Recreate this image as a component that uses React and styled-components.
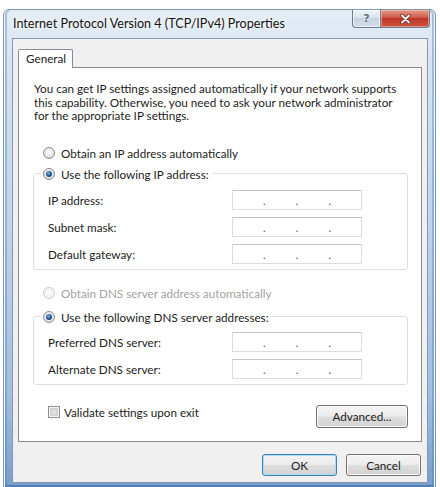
import React from 'react';
import styled, { createGlobalStyle, css } from 'styled-components';

const GlobalStyle = createGlobalStyle`
  html, body { margin: 0; padding: 0; background: #ffffff; }
  body { font-family: Lato, "Noto Sans", sans-serif; font-size: 11.7px; color: #1c1c1c; }
  * { box-sizing: border-box; }
`;

const Page = styled.div`
  width: 440px;
  height: 487px;
  overflow: hidden;
  padding: 9px 4px 0 3px;
`;

const Window = styled.div`
  width: 433px;
  height: 479px;
  border: 1px solid #7f97b2;
  border-radius: 6px 6px 0 0;
  background: linear-gradient(180deg, #e4edf6 0%, #d6e3f0 12%, #c0d4ea 45%, #a2c0e1 80%, #789fcc 100%);
  box-shadow: inset 1px 0 0 #f4f8fc, inset -1px 0 0 #f4f8fc, inset 3px 0 0 rgba(80, 126, 178, 0.4), inset -3px 0 0 rgba(80, 126, 178, 0.4), inset 0 -2px 0 rgba(60, 105, 160, 0.6);
  display: flex;
  flex-direction: column;
  padding: 0 7px 4px 8px;
`;

const TitleBar = styled.div`
  height: 28px;
  display: flex;
  align-items: flex-start;
  justify-content: space-between;
  margin-right: -2px;
`;

const Title = styled.div`
  padding-left: 1px;
  height: 28px;
  line-height: 28px;
  font-size: 12.6px;
  color: #111;
  text-shadow: 0 0 6px #fff, 0 0 3px #fff;
`;

const Caption = styled.div`
  display: flex;
`;

const CaptionButton = styled.div`
  height: 18px;
  width: ${p => p.$w}px;
  display: flex;
  align-items: center;
  justify-content: center;
  border: 1px solid #6b7c8f;
  border-top: none;
  ${p => p.$variant === 'close'
    ? css`
      border-left: none;
      border-radius: 0 0 4px 0;
      background: linear-gradient(180deg, #e59a8b 0%, #d05a48 45%, #bf3626 50%, #cc5540 100%);
      box-shadow: inset 0 0 0 1px rgba(255, 210, 200, 0.5);
    `
    : css`
      border-radius: 0 0 0 4px;
      background: linear-gradient(180deg, #eef3f8 0%, #d9e3ed 45%, #c6d3e0 50%, #d3dee9 100%);
      box-shadow: inset 0 0 0 1px rgba(255, 255, 255, 0.6);
    `}
`;

const HelpGlyph = styled.span`
  font-family: "DejaVu Sans", sans-serif;
  font-weight: bold;
  font-size: 11px;
  color: #5d6f84;
  text-shadow: 0 0 2px #fff;
`;

const Client = styled.div`
  height: 445px;
  background: #f0f0f0;
  border: 1px solid #8396ad;
  padding: 10px 5px 6px 5px;
  display: flex;
  flex-direction: column;
`;

const TabStrip = styled.div`
  display: flex;
  position: relative;
  z-index: 1;
  margin-bottom: -1px;
`;

const Tab = styled.div`
  width: 55px;
  height: 19px;
  background: #ffffff;
  border: 1px solid #898c95;
  border-bottom: none;
  border-radius: 2px 2px 0 0;
  padding-left: 7px;
  line-height: 17px;
  color: #222;
`;

const Panel = styled.div`
  height: 375px;
  background: #ffffff;
  border: 1px solid #898c95;
  padding: 14px 13px 0 14px;
  display: flex;
  flex-direction: column;
`;

const Description = styled.p`
  margin: 0 0 0 1px;
  line-height: 13.5px;
  color: #1c1c1c;
`;

const OptionRow = styled.label`
  display: flex;
  align-items: center;
  gap: 6px;
  height: 14px;
  margin-left: ${p => p.$indent ?? 10}px;
  margin-top: ${p => p.$top ?? 0}px;
  color: ${p => (p.$disabled ? '#a2a2a2' : '#1c1c1c')};
`;

const Radio = styled.span`
  position: relative;
  flex: none;
  width: 12px;
  height: 12px;
  border-radius: 50%;
  border: 1px solid ${p => (p.$disabled ? '#c9c9c9' : '#8a8c8e')};
  background: ${p => (p.$disabled
    ? 'radial-gradient(circle at 50% 40%, #fafafa 0%, #eeeeee 100%)'
    : 'radial-gradient(circle at 50% 40%, #ffffff 0%, #e4e4e4 60%, #cdcdcd 100%)')};
  ${p => p.$checked && css`
    &::after {
      content: '';
      position: absolute;
      inset: 2px;
      border-radius: 50%;
      background: radial-gradient(circle at 40% 35%, #8cc0ea 0%, #2a63a2 40%, #112f55 100%);
    }
  `}
`;

const Group = styled.fieldset`
  margin: ${p => p.$top ?? 0}px 0 0 0;
  border: 1px solid #d5dfe5;
  border-radius: 3px;
  padding: ${p => p.$pad ?? 9}px 0 5px 14px;
  display: flex;
  flex-direction: column;
  gap: 7px;
  min-width: 0;
`;

const Legend = styled.legend`
  margin-left: -7px;
  padding: 0 3px 0 2px;
  height: 14px;
  display: flex;
  align-items: center;
  gap: 6px;
  color: #1c1c1c;
`;

const FieldRow = styled.div`
  display: grid;
  grid-template-columns: 184px 130px;
  align-items: center;
  height: 20px;
`;

const FieldLabel = styled.span`
  color: #1c1c1c;
`;

const IpBox = styled.div`
  height: 20px;
  background: #ffffff;
  border: 1px solid #d9dde3;
  border-top-color: #c4c8ce;
  display: flex;
  align-items: center;
`;

const Segment = styled.span`
  flex: 1;
`;

const Dot = styled.span`
  width: 3px;
  text-align: center;
  color: #555;
  font-size: 11px;
  line-height: 1;
  padding-top: 2px;
`;

const BottomRow = styled.div`
  display: flex;
  justify-content: space-between;
  align-items: flex-start;
  margin-top: 20px;
`;

const CheckLabel = styled.label`
  display: flex;
  align-items: center;
  gap: 4px;
  margin: 1px 0 0 15px;
  height: 12px;
`;

const Checkbox = styled.span`
  width: 12px;
  height: 12px;
  border: 1px solid #8e8f8f;
  background: #f4f4f4;
  box-shadow: inset 0 0 0 1px #f4f4f4, inset 0 0 0 3px #d4d4d4;
  background-image: linear-gradient(135deg, #cbcbcb, #f6f6f6);
`;

const Button = styled.button`
  width: ${p => p.$w}px;
  height: ${p => p.$h ?? 22}px;
  font: inherit;
  color: #1c1c1c;
  padding: 0;
  border-radius: 3px;
  border: 1px solid ${p => (p.$primary ? '#3c7fb1' : '#707070')};
  background: linear-gradient(180deg, #f4f4f4 0%, #ececec 48%, #dedede 52%, #d2d2d2 100%);
  box-shadow: inset 0 0 0 1px ${p => (p.$primary ? '#aadcf5' : '#fbfbfb')};
`;

const ButtonRow = styled.div`
  display: flex;
  justify-content: flex-end;
  gap: 9px;
  margin-top: 12px;
  padding-right: 1px;
`;

function IpField() {
  return (
    <IpBox>
      <Segment />
      <Dot>.</Dot>
      <Segment />
      <Dot>.</Dot>
      <Segment />
      <Dot>.</Dot>
      <Segment />
    </IpBox>
  );
}

function CloseGlyph() {
  return (
    <svg width="11" height="10" viewBox="0 0 11 10">
      <path d="M2 1.5 L9 8.5 M9 1.5 L2 8.5" stroke="#6b2a22" strokeWidth="3.4" strokeLinecap="round" />
      <path d="M2 1.5 L9 8.5 M9 1.5 L2 8.5" stroke="#ffffff" strokeWidth="1.8" strokeLinecap="round" />
    </svg>
  );
}

export default function App() {
  return (
    <>
      <GlobalStyle />
      <Page>
        <Window>
          <TitleBar>
            <Title>Internet Protocol Version 4 (TCP/IPv4) Properties</Title>
            <Caption>
              <CaptionButton $w={29} $variant="help"><HelpGlyph>?</HelpGlyph></CaptionButton>
              <CaptionButton $w={49} $variant="close"><CloseGlyph /></CaptionButton>
            </Caption>
          </TitleBar>
          <Client>
            <TabStrip>
              <Tab>General</Tab>
            </TabStrip>
            <Panel>
              <Description>
                You can get IP settings assigned automatically if your network supports
                <br />this capability. Otherwise, you need to ask your network administrator
                <br />for the appropriate IP settings.
              </Description>
              <OptionRow $top={23}>
                <Radio />
                Obtain an IP address automatically
              </OptionRow>
              <Group $top={7} $pad={9}>
                <Legend>
                  <Radio $checked />
                  Use the following IP address:
                </Legend>
                <FieldRow><FieldLabel>IP address:</FieldLabel><IpField /></FieldRow>
                <FieldRow><FieldLabel>Subnet mask:</FieldLabel><IpField /></FieldRow>
                <FieldRow><FieldLabel>Default gateway:</FieldLabel><IpField /></FieldRow>
              </Group>
              <OptionRow $top={16} $disabled>
                <Radio $disabled />
                Obtain DNS server address automatically
              </OptionRow>
              <Group $top={10} $pad={8}>
                <Legend>
                  <Radio $checked />
                  Use the following DNS server addresses:
                </Legend>
                <FieldRow><FieldLabel>Preferred DNS server:</FieldLabel><IpField /></FieldRow>
                <FieldRow><FieldLabel>Alternate DNS server:</FieldLabel><IpField /></FieldRow>
              </Group>
              <BottomRow>
                <CheckLabel>
                  <Checkbox />
                  Validate settings upon exit
                </CheckLabel>
                <Button $w={92} $h={23}>Advanced...</Button>
              </BottomRow>
            </Panel>
            <ButtonRow>
              <Button $w={75} $primary>OK</Button>
              <Button $w={75}>Cancel</Button>
            </ButtonRow>
          </Client>
        </Window>
      </Page>
    </>
  );
}
